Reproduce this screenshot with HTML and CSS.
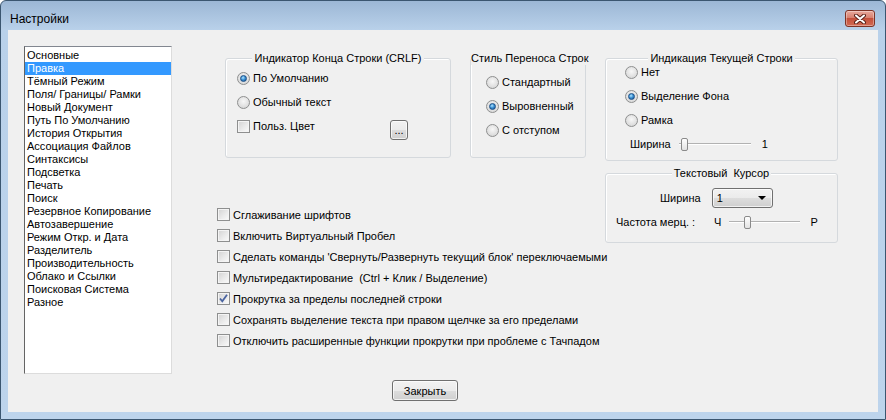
FILE: index.html
```html
<!DOCTYPE html>
<html lang="ru">
<head>
    <meta charset="UTF-8">
    <title>Настройки</title>
    <link rel="stylesheet" href="styles.css">
</head>
<body>
    <div class="window">
        <div class="titlebar">
            <span class="title">Настройки</span>
            <button class="close-btn" title="Закрыть">
                <svg width="12" height="10" viewBox="0 0 12 10">
                    <path d="M2 1.5 L10 8.5 M10 1.5 L2 8.5" stroke="#5a2118" stroke-width="4" stroke-linecap="round"/>
                    <path d="M2 1.5 L10 8.5 M10 1.5 L2 8.5" stroke="#ffffff" stroke-width="2" stroke-linecap="round"/>
                </svg>
            </button>
        </div>

        <div class="client">
            <!-- Список разделов -->
            <ul class="nav-list">
                <li>Основные</li>
                <li class="selected">Правка</li>
                <li>Тёмный Режим</li>
                <li>Поля/ Границы/ Рамки</li>
                <li>Новый Документ</li>
                <li>Путь По Умолчанию</li>
                <li>История Открытия</li>
                <li>Ассоциация Файлов</li>
                <li>Синтаксисы</li>
                <li>Подсветка</li>
                <li>Печать</li>
                <li>Поиск</li>
                <li>Резервное Копирование</li>
                <li>Автозавершение</li>
                <li>Режим Откр. и Дата</li>
                <li>Разделитель</li>
                <li>Производительность</li>
                <li>Облако и Ссылки</li>
                <li>Поисковая Система</li>
                <li>Разное</li>
            </ul>

            <div class="main">
                <div class="columns">
                    <div class="col-left">
                        <div class="top-groups">
                            <div class="group group-crlf">
                                <div class="group-title">Индикатор Конца Строки (CRLF)</div>
                                <div class="opts">
                                    <label class="opt"><span class="radio checked"></span>По Умолчанию</label>
                                    <label class="opt"><span class="radio"></span>Обычный текст</label>
                                    <div class="opt">
                                        <span class="checkbox"></span>Польз. Цвет
                                        <button class="btn dots-btn">...</button>
                                    </div>
                                </div>
                            </div>

                            <div class="group group-wrap">
                                <div class="group-title">Стиль Переноса Строк</div>
                                <div class="opts">
                                    <label class="opt"><span class="radio"></span>Стандартный</label>
                                    <label class="opt"><span class="radio checked"></span>Выровненный</label>
                                    <label class="opt"><span class="radio"></span>С отступом</label>
                                </div>
                            </div>
                        </div>

                        <div class="checks">
                            <label class="check-row"><span class="checkbox"></span>Сглаживание шрифтов</label>
                            <label class="check-row"><span class="checkbox"></span>Включить Виртуальный Пробел</label>
                            <label class="check-row"><span class="checkbox"></span>Сделать команды 'Свернуть/Развернуть текущий блок' переключаемыми</label>
                            <label class="check-row"><span class="checkbox"></span>Мультиредактирование&nbsp; (Ctrl + Клик / Выделение)</label>
                            <label class="check-row"><span class="checkbox checked"></span>Прокрутка за пределы последней строки</label>
                            <label class="check-row"><span class="checkbox"></span>Сохранять выделение текста при правом щелчке за его пределами</label>
                            <label class="check-row"><span class="checkbox"></span>Отключить расширенные функции прокрутки при проблеме с Тачпадом</label>
                        </div>
                    </div>

                    <div class="col-right">
                        <div class="group group-line">
                            <div class="group-title">Индикация Текущей Строки</div>
                            <div class="opts">
                                <label class="opt"><span class="radio"></span>Нет</label>
                                <label class="opt"><span class="radio checked"></span>Выделение Фона</label>
                                <label class="opt"><span class="radio"></span>Рамка</label>
                                <div class="opt width-row">
                                    <span>Ширина</span>
                                    <div class="slider slider-width"><span class="thumb"></span></div>
                                    <span class="slider-value">1</span>
                                </div>
                            </div>
                        </div>

                        <div class="group group-cursor">
                            <div class="group-title">Текстовый&nbsp; Курсор</div>
                            <div class="cursor-row row-width">
                                <span>Ширина</span>
                                <div class="combo">
                                    <span>1</span>
                                    <span class="combo-arrow"></span>
                                </div>
                            </div>
                            <div class="cursor-row row-blink">
                                <span>Частота мерц. :</span>
                                <span class="blink-min">Ч</span>
                                <div class="slider slider-blink"><span class="thumb"></span></div>
                                <span class="blink-max">Р</span>
                            </div>
                        </div>
                    </div>
                </div>

                <div class="footer">
                    <button class="btn close-dialog">Закрыть</button>
                </div>
            </div>
        </div>
    </div>
</body>
</html>
```

FILE: styles.css
```css
body {
    margin: 0;
    font-family: "Liberation Sans", Arial, sans-serif;
    font-size: 11px;
    color: #000;
    background: #fff;
}
.window {
    width: 886px;
    height: 420px;
    box-sizing: border-box;
    border: 1px solid #3b5670;
    border-radius: 6px 6px 0 0;
    background: linear-gradient(#9cb7d5, #b9d1ea 29px, #bdd4ec);
    display: flex;
    flex-direction: column;
}
.titlebar {
    height: 29px;
    display: flex;
    align-items: flex-start;
    padding-left: 9px;
}
.title {
    flex: 1;
    font-size: 12px;
    line-height: 14px;
    margin-top: 11px;
}
.close-btn {
    width: 30px;
    height: 17px;
    margin: 9px 10px 0 0;
    padding: 0;
    border: 1px solid #7d3326;
    border-radius: 3px;
    background: linear-gradient(#e9a99c 0%, #d7806f 45%, #c4503b 50%, #d26b55 100%);
    box-shadow: inset 0 0 0 1px rgba(255, 255, 255, 0.35);
    display: flex;
    align-items: center;
    justify-content: center;
}
.client {
    flex: 1;
    margin: 0 7px 7px;
    background: #f0f0f0;
    display: flex;
    align-items: flex-start;
    padding: 16px 0 0 16px;
}

/* список разделов */
.nav-list {
    list-style: none;
    margin: 0;
    padding: 2px 0 0;
    width: 148px;
    height: 328px;
    box-sizing: border-box;
    border: 1px solid;
    border-color: #828790 #dcdcdc #dcdcdc #646464;
    background: #fff;
}
.nav-list li {
    height: 13px;
    line-height: 13px;
    padding-left: 2px;
    white-space: nowrap;
}
.nav-list li.selected {
    background: #3399ff;
    color: #fff;
}

.main {
    margin-left: 45px;
    display: flex;
    flex-direction: column;
}
.columns {
    display: flex;
    gap: 19px;
}
.col-left {
    width: 369px;
}
.top-groups {
    display: flex;
    gap: 19px;
    margin: 12px 0 0 8px;
}

/* групповые рамки */
.group {
    box-sizing: border-box;
    border: 1px solid #d5d9dd;
    border-radius: 3px;
    box-shadow: inset 1px 1px 0 #fff;
}
.group-title {
    width: fit-content;
    margin: -8px auto 0;
    padding: 0 2px;
    line-height: 14px;
    background: #f0f0f0;
    white-space: nowrap;
}
.group-crlf {
    width: 226px;
    height: 100px;
}
.group-wrap {
    width: 116px;
    height: 100px;
}
.group-wrap .group-title {
    padding: 0;
}
.group-line {
    width: 233px;
    height: 103px;
    margin-top: 12px;
}
.group-cursor {
    width: 233px;
    height: 70px;
    margin-top: 12px;
}

.opts {
    display: flex;
    flex-direction: column;
}
.group-crlf .opts {
    padding: 1px 0 0 11px;
}
.group-wrap .opts {
    padding: 5px 0 0 15px;
}
.group-line .opts {
    margin-top: -5px;
    padding-left: 19px;
}
.opt {
    display: flex;
    align-items: center;
    gap: 3px;
    height: 24px;
    white-space: nowrap;
}

/* радио и флажки */
.radio {
    width: 13px;
    height: 13px;
    box-sizing: border-box;
    border: 1px solid #8e8f8f;
    border-radius: 50%;
    background: radial-gradient(circle at 50% 40%, #f7f7f7 0, #e2e2e2 55%, #cfcfcf 100%);
    display: flex;
    align-items: center;
    justify-content: center;
    flex-shrink: 0;
}
.radio.checked::after {
    content: "";
    width: 7px;
    height: 7px;
    box-sizing: border-box;
    border-radius: 50%;
    border: 1px solid #1c4f86;
    background: radial-gradient(circle at 40% 35%, #b4e6ff 0, #3d93d6 45%, #114b8a 100%);
}
.checkbox {
    width: 13px;
    height: 13px;
    box-sizing: border-box;
    border: 1px solid #8e8f8f;
    background: linear-gradient(135deg, #d2d2d2 0%, #eaeaea 55%, #fbfbfb 100%);
    box-shadow: inset 0 0 0 1px #f4f4f4;
    flex-shrink: 0;
}
.checkbox.checked {
    background:
        url("data:image/svg+xml;utf8,<svg xmlns='http://www.w3.org/2000/svg' width='11' height='11' viewBox='0 0 11 11'><path d='M2 5.5 L4.3 8.3 L9 1.8' fill='none' stroke='%234a64a0' stroke-width='1.8'/></svg>") center/11px 11px no-repeat,
        linear-gradient(135deg, #d2d2d2 0%, #eaeaea 55%, #fbfbfb 100%);
}

.checks {
    margin-top: 46px;
}
.check-row {
    display: flex;
    align-items: center;
    gap: 3px;
    height: 21px;
    white-space: nowrap;
}

/* кнопки */
.btn {
    font-family: inherit;
    font-size: 11px;
    padding: 0;
    border: 1px solid #707070;
    border-radius: 3px;
    background: linear-gradient(#f2f2f2 0%, #ebebeb 50%, #dddddd 50%, #cfcfcf 100%);
    box-shadow: inset 0 0 0 1px rgba(255, 255, 255, 0.7);
    color: #000;
}
.dots-btn {
    width: 18px;
    height: 20px;
    margin: 7px 42px 0 auto;
    line-height: 14px;
}
.footer {
    margin-top: 29px;
    padding-left: 175px;
}
.close-dialog {
    width: 66px;
    height: 21px;
}

/* ползунки */
.slider {
    height: 16px;
    display: flex;
    align-items: center;
    background: linear-gradient(transparent 7px, #b2b2b2 7px, #b2b2b2 8px, #ffffff 8px, #ffffff 9px, transparent 9px);
}
.thumb {
    width: 7px;
    height: 13px;
    box-sizing: border-box;
    border: 1px solid #8a8a8a;
    border-radius: 2px;
    background: linear-gradient(#fefefe, #e3e3e3);
}
.width-row {
    margin-left: 5px;
}
.slider-width {
    width: 72px;
    margin-left: 5px;
}
.slider-width .thumb {
    margin-left: 2px;
}
.slider-value {
    margin-left: 8px;
}

.cursor-row {
    display: flex;
    align-items: center;
    height: 22px;
    white-space: nowrap;
}
.row-width {
    margin-top: 7px;
    padding-left: 54px;
}
.row-blink {
    margin-top: 2px;
    padding-left: 10px;
}
.combo {
    width: 61px;
    height: 20px;
    margin-left: 11px;
    box-sizing: border-box;
    border: 1px solid #707070;
    border-radius: 3px;
    background: linear-gradient(#f2f2f2 0%, #ebebeb 50%, #dddddd 50%, #cfcfcf 100%);
    box-shadow: inset 0 0 0 1px rgba(255, 255, 255, 0.7);
    display: flex;
    align-items: center;
    justify-content: space-between;
    padding: 0 6px 0 4px;
}
.combo-arrow {
    width: 0;
    height: 0;
    border-left: 4px solid transparent;
    border-right: 4px solid transparent;
    border-top: 4px solid #000;
}
.blink-min {
    margin-left: 19px;
}
.slider-blink {
    width: 71px;
    margin-left: 8px;
}
.slider-blink .thumb {
    margin-left: 15px;
}
.blink-max {
    margin-left: 10px;
}
```
